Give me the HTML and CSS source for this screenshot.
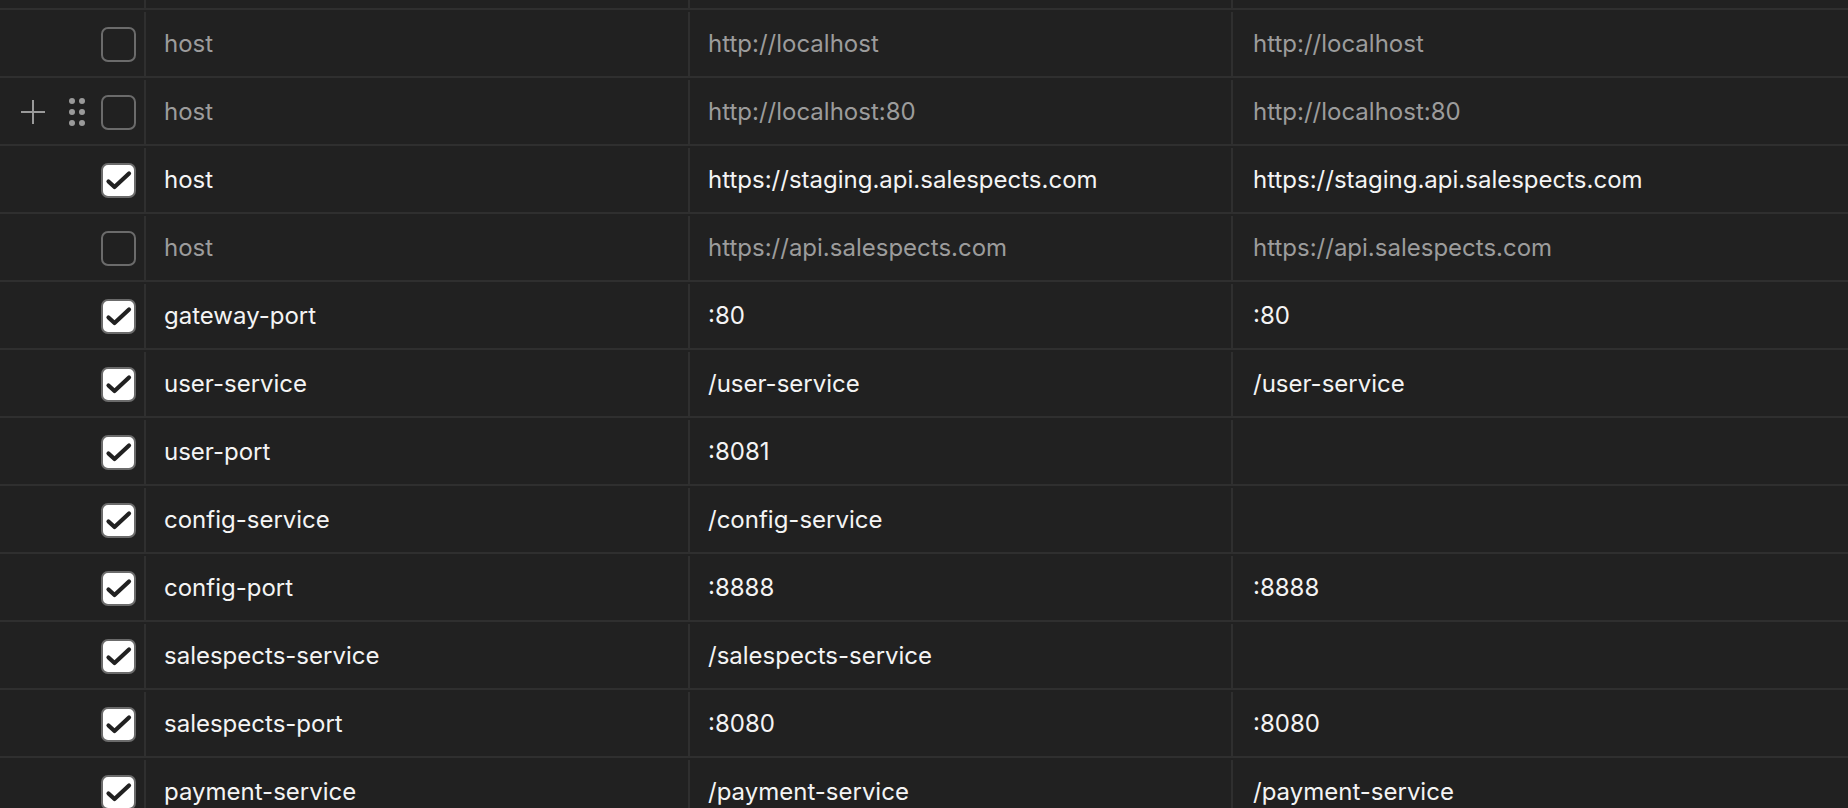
FILE: index.html
```html
<!DOCTYPE html>
<html>
<head>
<meta charset="utf-8">
<link rel="stylesheet" href="styles.css">
</head>
<body>
<div class="table">
  <div class="row row-top">
    <div class="gutter"></div>
    <div class="cell"></div>
    <div class="cell"></div>
    <div class="cell"></div>
  </div>

  <div class="row off">
    <div class="gutter"><span class="box"></span></div>
    <div class="cell">host</div>
    <div class="cell">http://localhost</div>
    <div class="cell">http://localhost</div>
  </div>

  <div class="row off">
    <div class="gutter">
      <svg class="plus" width="24" height="24" viewBox="0 0 24 24"><path d="M12 0V24M0 12H24" stroke="#9a9a9a" stroke-width="2"/></svg>
      <svg class="drag" width="16" height="28" viewBox="0 0 16 28"><g fill="#9a9a9a"><circle cx="3" cy="3" r="3"/><circle cx="13" cy="3" r="3"/><circle cx="3" cy="14" r="3"/><circle cx="13" cy="14" r="3"/><circle cx="3" cy="25" r="3"/><circle cx="13" cy="25" r="3"/></g></svg>
      <span class="box"></span>
    </div>
    <div class="cell">host</div>
    <div class="cell">http://localhost:80</div>
    <div class="cell">http://localhost:80</div>
  </div>

  <div class="row">
    <div class="gutter"><span class="box checked"><svg viewBox="0 0 35 35" width="35" height="35"><path d="M7.5 18.5L13.5 24L28 10.5" fill="none" stroke="#212121" stroke-width="4.2" stroke-linecap="round" stroke-linejoin="round"/></svg></span></div>
    <div class="cell">host</div>
    <div class="cell">https://staging.api.salespects.com</div>
    <div class="cell">https://staging.api.salespects.com</div>
  </div>

  <div class="row off">
    <div class="gutter"><span class="box"></span></div>
    <div class="cell">host</div>
    <div class="cell">https://api.salespects.com</div>
    <div class="cell">https://api.salespects.com</div>
  </div>

  <div class="row">
    <div class="gutter"><span class="box checked"><svg viewBox="0 0 35 35" width="35" height="35"><path d="M7.5 18.5L13.5 24L28 10.5" fill="none" stroke="#212121" stroke-width="4.2" stroke-linecap="round" stroke-linejoin="round"/></svg></span></div>
    <div class="cell">gateway-port</div>
    <div class="cell">:80</div>
    <div class="cell">:80</div>
  </div>

  <div class="row">
    <div class="gutter"><span class="box checked"><svg viewBox="0 0 35 35" width="35" height="35"><path d="M7.5 18.5L13.5 24L28 10.5" fill="none" stroke="#212121" stroke-width="4.2" stroke-linecap="round" stroke-linejoin="round"/></svg></span></div>
    <div class="cell">user-service</div>
    <div class="cell">/user-service</div>
    <div class="cell">/user-service</div>
  </div>

  <div class="row">
    <div class="gutter"><span class="box checked"><svg viewBox="0 0 35 35" width="35" height="35"><path d="M7.5 18.5L13.5 24L28 10.5" fill="none" stroke="#212121" stroke-width="4.2" stroke-linecap="round" stroke-linejoin="round"/></svg></span></div>
    <div class="cell">user-port</div>
    <div class="cell">:8081</div>
    <div class="cell"></div>
  </div>

  <div class="row">
    <div class="gutter"><span class="box checked"><svg viewBox="0 0 35 35" width="35" height="35"><path d="M7.5 18.5L13.5 24L28 10.5" fill="none" stroke="#212121" stroke-width="4.2" stroke-linecap="round" stroke-linejoin="round"/></svg></span></div>
    <div class="cell">config-service</div>
    <div class="cell">/config-service</div>
    <div class="cell"></div>
  </div>

  <div class="row">
    <div class="gutter"><span class="box checked"><svg viewBox="0 0 35 35" width="35" height="35"><path d="M7.5 18.5L13.5 24L28 10.5" fill="none" stroke="#212121" stroke-width="4.2" stroke-linecap="round" stroke-linejoin="round"/></svg></span></div>
    <div class="cell">config-port</div>
    <div class="cell">:8888</div>
    <div class="cell">:8888</div>
  </div>

  <div class="row">
    <div class="gutter"><span class="box checked"><svg viewBox="0 0 35 35" width="35" height="35"><path d="M7.5 18.5L13.5 24L28 10.5" fill="none" stroke="#212121" stroke-width="4.2" stroke-linecap="round" stroke-linejoin="round"/></svg></span></div>
    <div class="cell">salespects-service</div>
    <div class="cell">/salespects-service</div>
    <div class="cell"></div>
  </div>

  <div class="row">
    <div class="gutter"><span class="box checked"><svg viewBox="0 0 35 35" width="35" height="35"><path d="M7.5 18.5L13.5 24L28 10.5" fill="none" stroke="#212121" stroke-width="4.2" stroke-linecap="round" stroke-linejoin="round"/></svg></span></div>
    <div class="cell">salespects-port</div>
    <div class="cell">:8080</div>
    <div class="cell">:8080</div>
  </div>

  <div class="row">
    <div class="gutter"><span class="box checked"><svg viewBox="0 0 35 35" width="35" height="35"><path d="M7.5 18.5L13.5 24L28 10.5" fill="none" stroke="#212121" stroke-width="4.2" stroke-linecap="round" stroke-linejoin="round"/></svg></span></div>
    <div class="cell">payment-service</div>
    <div class="cell">/payment-service</div>
    <div class="cell">/payment-service</div>
  </div>
</div>
</body>
</html>
```

FILE: styles.css
```css
html, body {
  margin: 0;
  padding: 0;
  background: #212121;
  overflow: hidden;
}

body {
  width: 1848px;
  height: 808px;
  font-family: Inter, "Noto Sans", sans-serif;
  font-size: 24px;
  color: #f4f4f4;
}

.table {
  margin-top: -58px;
}

.row {
  display: grid;
  grid-template-columns: 144px 544px 543px 1fr;
  height: 68px;
  box-sizing: border-box;
  padding-top: 2px;
  border-bottom: 2px solid #2f2f2f;
}

.off .cell {
  color: #9c9c9c;
}

.gutter {
  display: flex;
  align-items: center;
  justify-content: flex-end;
  padding-right: 8px;
}

.cell {
  border-left: 2px solid #2f2f2f;
  display: flex;
  align-items: center;
  padding-left: 18px;
  padding-bottom: 2px;
  white-space: nowrap;
  overflow: hidden;
}

.cell:last-child {
  padding-left: 20px;
}

.plus {
  margin-right: 24px;
}

.drag {
  margin-right: 16px;
}

.box {
  width: 35px;
  height: 35px;
  box-sizing: border-box;
  border: 2px solid #6b6b6b;
  border-radius: 7px;
  position: relative;
  flex: none;
}

.box.checked {
  background: #ffffff;
}

.box.checked svg {
  position: absolute;
  left: -2px;
  top: -2px;
}
```
